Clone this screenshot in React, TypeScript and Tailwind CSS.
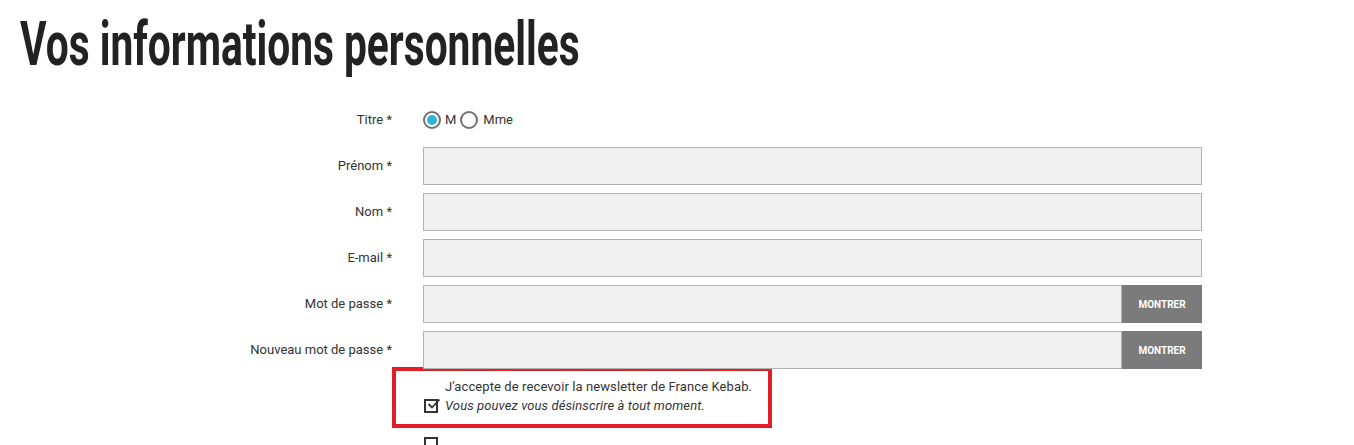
import React from "react";

const font = { fontFamily: "Roboto, 'Liberation Sans', sans-serif" };

function Label({ children }: { children: React.ReactNode }) {
  return (
    <div className="flex h-[38px] items-center justify-end text-[13px] text-[#333]">
      {children}
    </div>
  );
}

function Input({ button }: { button?: boolean }) {
  return (
    <div className="flex h-[38px] w-[779px]">
      <div className="h-full flex-1 border border-[#b3b3b3] bg-[#f0f0f0]" />
      {button && (
        <div className="flex h-full w-[80px] items-center justify-center bg-[#7b7b7b] text-[10px] font-bold text-white">
          MONTRER
        </div>
      )}
    </div>
  );
}

export default function App() {
  return (
    <div className="h-[445px] w-[1354px] overflow-hidden bg-white" style={font}>
      <h1 className="ml-[20px] mt-[14px] h-[60px] whitespace-nowrap text-[61px] font-bold leading-[60px] text-[#222]">
        <span className="inline-block origin-left scale-x-[0.667]">Vos informations personnelles</span>
      </h1>
      <div className="mt-[27px] grid grid-cols-[392px_779px] gap-x-[31px] gap-y-[8px]">
        <Label>Titre *</Label>
        <div className="flex h-[38px] items-center text-[13px] text-[#333]">
          <span className="flex h-[18px] w-[18px] items-center justify-center rounded-full border-2 border-[#707070] bg-white">
            <span className="h-[10px] w-[10px] rounded-full bg-[#2db4d6]" />
          </span>
          <span className="ml-[4px]">M</span>
          <span className="ml-[4px] h-[18px] w-[18px] rounded-full border-2 border-[#707070] bg-white" />
          <span className="ml-[5px]">Mme</span>
        </div>
        <Label>Prénom *</Label>
        <Input />
        <Label>Nom *</Label>
        <Input />
        <Label>E-mail *</Label>
        <Input />
        <Label>Mot de passe *</Label>
        <Input button />
        <Label>Nouveau mot de passe *</Label>
        <Input button />
      </div>
      <div className="ml-[392px] mt-[-2px] flex h-[61px] w-[380px] items-end border-4 border-[#e41e26] pb-[9px] pl-[28px] text-[13px] tracking-[0.1px] text-[#333]">
        <span className="relative mb-[2px] h-[14px] w-[14px] shrink-0 border-2 border-[#333]">
          <svg width="14" height="12" viewBox="0 0 14 12" className="absolute left-[1px] top-[-3px]">
            <path d="M1.5 6 L5 9.5 L12.5 1.5" fill="none" stroke="#333" strokeWidth="1.8" />
          </svg>
        </span>
        <div className="ml-[7px] leading-[19px]">
          <div>J'accepte de recevoir la newsletter de France Kebab.</div>
          <div className="italic">Vous pouvez vous désinscrire à tout moment.</div>
        </div>
      </div>
      <div className="ml-[424px] mt-[9px] h-[14px] w-[14px] border-2 border-[#333]" />
    </div>
  );
}
